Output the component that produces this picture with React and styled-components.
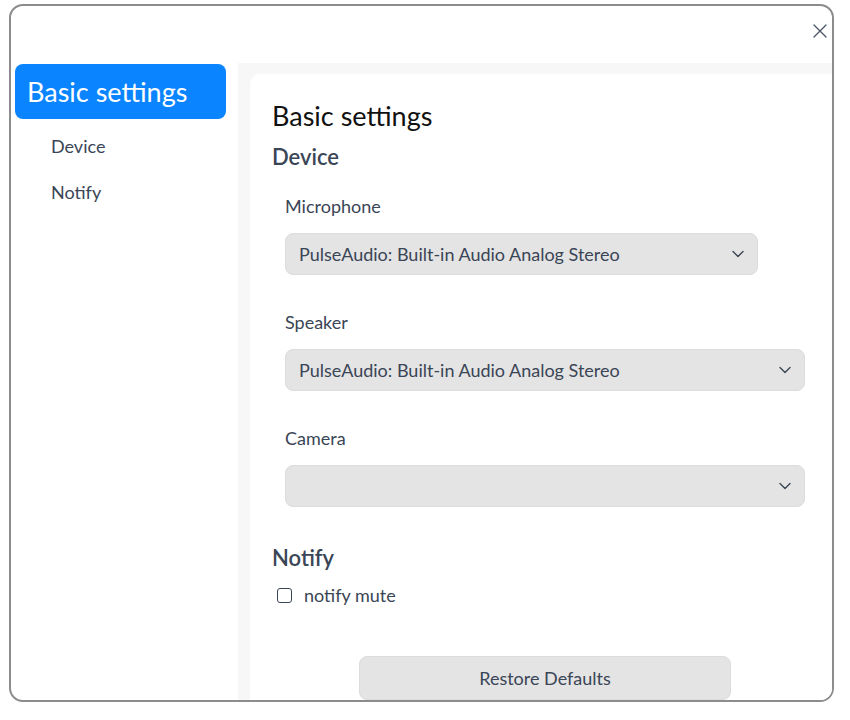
import styled, { createGlobalStyle } from "styled-components";

const GlobalStyle = createGlobalStyle`
  html, body {
    margin: 0;
    padding: 0;
    background: #ffffff;
    font-family: "Lato", "Noto Sans", sans-serif;
  }
  * {
    box-sizing: border-box;
  }
`;

const devices = [
  { label: "Microphone", value: "PulseAudio: Built-in Audio Analog Stereo", narrow: true },
  { label: "Speaker", value: "PulseAudio: Built-in Audio Analog Stereo" },
  { label: "Camera", value: "" },
];

const ChevronIcon = () => (
  <svg width="14" height="14" viewBox="0 0 14 14" fill="none">
    <path d="M2 4.5 L7 9.5 L12 4.5" stroke="#3d4656" strokeWidth="1.4" strokeLinecap="round" strokeLinejoin="round" />
  </svg>
);

const CloseIcon = () => (
  <svg width="16" height="16" viewBox="0 0 16 16" fill="none">
    <path d="M2 2 L14 14 M14 2 L2 14" stroke="#4a5366" strokeWidth="1.3" strokeLinecap="round" />
  </svg>
);

const App = () => {
  return (
    <>
      <GlobalStyle />
      <Page>
        <Window>
          <TitleBar>
            <CloseButton aria-label="close">
              <CloseIcon />
            </CloseButton>
          </TitleBar>
          <Body>
            <Sidebar>
              <NavItem active>Basic settings</NavItem>
              <NavItem>Device</NavItem>
              <NavItem>Notify</NavItem>
            </Sidebar>
            <Main>
              <Card>
                <Heading>Basic settings</Heading>
                <Section>Device</Section>
                {devices.map((d, i) => (
                  <Field key={d.label} first={i === 0}>
                    <Label>{d.label}</Label>
                    <Select narrow={d.narrow}>
                      <span>{d.value}</span>
                      <ChevronIcon />
                    </Select>
                  </Field>
                ))}
                <Section spaced>Notify</Section>
                <CheckRow>
                  <Checkbox />
                  <span>notify mute</span>
                </CheckRow>
                <Footer>
                  <RestoreButton>Restore Defaults</RestoreButton>
                </Footer>
              </Card>
            </Main>
          </Body>
        </Window>
      </Page>
    </>
  );
};

const Page = styled.div`
  width: 850px;
  height: 720px;
  padding: 4px 0 0 9px;
  overflow: hidden;
`;
const Window = styled.div`
  width: 825px;
  height: 698px;
  border: 2px solid #8c8c8c;
  border-radius: 14px;
  overflow: hidden;
  display: flex;
  flex-direction: column;
  background: #ffffff;
`;
const TitleBar = styled.div`
  height: 57px;
  display: flex;
  justify-content: flex-end;
  align-items: flex-start;
  padding: 15px 0 0 0;
`;
const CloseButton = styled.button`
  border: none;
  background: none;
  padding: 0;
  width: 24px;
  height: 20px;
  display: flex;
  align-items: center;
  justify-content: center;
`;
const Body = styled.div`
  flex: 1;
  display: flex;
  min-height: 0;
`;
const Sidebar = styled.nav`
  width: 227px;
  flex-shrink: 0;
  padding: 1px 12px 0 4px;
  display: flex;
  flex-direction: column;
`;
const NavItem = styled.div`
  border-radius: 8px;
  color: ${(p) => (p.active ? "#ffffff" : "#3a4556")};
  background: ${(p) => (p.active ? "#0a84ff" : "transparent")};
  font-size: ${(p) => (p.active ? "27px" : "18px")};
  height: ${(p) => (p.active ? "55px" : "46px")};
  padding-left: ${(p) => (p.active ? "12px" : "36px")};
  margin-bottom: ${(p) => (p.active ? "4px" : "0")};
  display: flex;
  align-items: center;
`;
const Main = styled.main`
  flex: 1;
  background: #f7f7f7;
  padding: 11px 0 0 12px;
  min-width: 0;
`;
const Card = styled.section`
  background: #ffffff;
  border-radius: 10px 0 0 0;
  height: 100%;
  padding: 24px 27px 0 22px;
`;
const Heading = styled.h1`
  margin: 0;
  font-size: 27px;
  font-weight: 400;
  color: #111111;
  line-height: 36px;
`;
const Section = styled.h2`
  margin: ${(p) => (p.spaced ? "35px" : "7px")} 0 0;
  font-size: 22px;
  font-weight: 600;
  color: #3a4556;
  line-height: 32px;
`;
const Field = styled.div`
  padding-left: 13px;
  margin-top: ${(p) => (p.first ? "21px" : "35px")};
`;
const Label = styled.div`
  font-size: 18px;
  color: #3a4556;
  line-height: 24px;
  margin-bottom: 15px;
`;
const Select = styled.div`
  width: ${(p) => (p.narrow ? "473px" : "100%")};
  height: 42px;
  background: #e4e4e4;
  border: 1px solid #dcdcdc;
  border-radius: 8px;
  display: flex;
  align-items: center;
  justify-content: space-between;
  padding: 0 12px 0 13px;
  font-size: 18px;
  color: #3a4556;
`;
const CheckRow = styled.label`
  display: flex;
  align-items: center;
  gap: 12px;
  margin: 10px 0 0 5px;
  font-size: 18px;
  color: #3a4556;
`;
const Checkbox = styled.span`
  width: 15px;
  height: 15px;
  border: 1.5px solid #3a4556;
  border-radius: 3px;
`;
const Footer = styled.div`
  display: flex;
  justify-content: center;
  padding-left: 13px;
  margin-top: 50px;
`;
const RestoreButton = styled.button`
  width: 372px;
  height: 44px;
  background: #e4e4e4;
  border: 1px solid #dcdcdc;
  border-radius: 8px;
  font-family: inherit;
  font-size: 18px;
  color: #3a4556;
`;

export default App;
